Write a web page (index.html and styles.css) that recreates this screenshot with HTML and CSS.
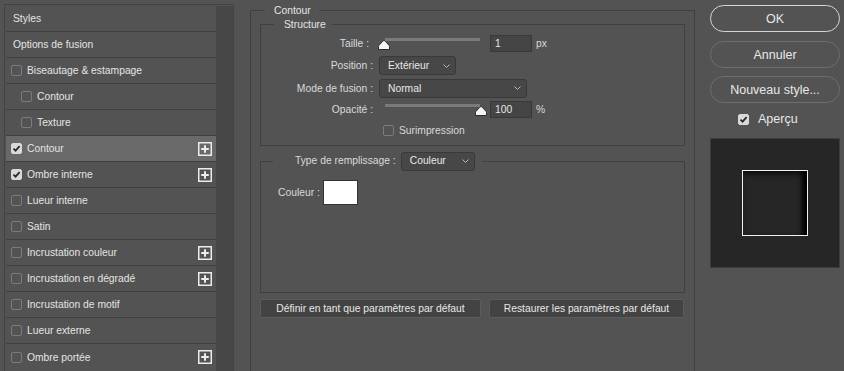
FILE: index.html
```html
<!DOCTYPE html>
<html lang="fr">
<head>
<meta charset="utf-8">
<title>Style de calque</title>
<link rel="stylesheet" href="styles.css">
</head>
<body>
<div class="dialog">
  <aside class="styles-panel">
    <ul class="style-list">
      <li class="row head">Styles</li>
      <li class="row head">Options de fusion</li>
      <li class="row"><span class="cb"></span>Biseautage &amp; estampage</li>
      <li class="row sub"><span class="cb"></span>Contour</li>
      <li class="row sub"><span class="cb"></span>Texture</li>
      <li class="row selected"><span class="cb checked"><svg viewBox="0 0 11 11"><path d="M2.5 5.6 L4.6 7.7 L8.6 3.2"/></svg></span>Contour<span class="plus"><svg viewBox="0 0 14 14"><rect x="0.75" y="0.75" width="12.5" height="12.5"/><path d="M7 3.2 V10.8 M3.2 7 H10.8"/></svg></span></li>
      <li class="row"><span class="cb checked"><svg viewBox="0 0 11 11"><path d="M2.5 5.6 L4.6 7.7 L8.6 3.2"/></svg></span>Ombre interne<span class="plus"><svg viewBox="0 0 14 14"><rect x="0.75" y="0.75" width="12.5" height="12.5"/><path d="M7 3.2 V10.8 M3.2 7 H10.8"/></svg></span></li>
      <li class="row"><span class="cb"></span>Lueur interne</li>
      <li class="row"><span class="cb"></span>Satin</li>
      <li class="row"><span class="cb"></span>Incrustation couleur<span class="plus"><svg viewBox="0 0 14 14"><rect x="0.75" y="0.75" width="12.5" height="12.5"/><path d="M7 3.2 V10.8 M3.2 7 H10.8"/></svg></span></li>
      <li class="row"><span class="cb"></span>Incrustation en dégradé<span class="plus"><svg viewBox="0 0 14 14"><rect x="0.75" y="0.75" width="12.5" height="12.5"/><path d="M7 3.2 V10.8 M3.2 7 H10.8"/></svg></span></li>
      <li class="row"><span class="cb"></span>Incrustation de motif</li>
      <li class="row"><span class="cb"></span>Lueur externe</li>
      <li class="row"><span class="cb"></span>Ombre portée<span class="plus"><svg viewBox="0 0 14 14"><rect x="0.75" y="0.75" width="12.5" height="12.5"/><path d="M7 3.2 V10.8 M3.2 7 H10.8"/></svg></span></li>
    </ul>
    <div class="scroll-strip"></div>
  </aside>

  <main class="settings">
    <fieldset class="group outer">
      <legend class="legend outer-legend">Contour</legend>

      <fieldset class="group structure">
        <legend class="legend structure-legend">Structure</legend>
        <div class="form">
          <label class="lbl lbl-taille">Taille :</label>
          <div class="ctrl">
            <div class="slider">
              <div class="track"></div>
              <div class="rail"><span class="thumb" style="left:0%"><svg viewBox="0 0 12 10"><path d="M6 0.6 Q6.8 0.6 7.6 1.6 L11.2 5.6 Q11.5 6 11.5 6.6 V9.5 H0.5 V6.6 Q0.5 6 0.8 5.6 L4.4 1.6 Q5.2 0.6 6 0.6 Z"/></svg></span></div>
            </div>
            <span class="num">1</span><span class="unit">px</span>
          </div>

          <label class="lbl">Position :</label>
          <div class="ctrl">
            <div class="select sel-position"><span>Extérieur</span><svg class="chev" viewBox="0 0 7 4"><path d="M0.5 0.5 L3.5 3.5 L6.5 0.5"/></svg></div>
          </div>

          <label class="lbl lbl-mode">Mode de fusion :</label>
          <div class="ctrl ctrl-mode">
            <div class="select sel-mode"><span>Normal</span><svg class="chev" viewBox="0 0 7 4"><path d="M0.5 0.5 L3.5 3.5 L6.5 0.5"/></svg></div>
          </div>

          <label class="lbl">Opacité :</label>
          <div class="ctrl">
            <div class="slider">
              <div class="track"></div>
              <div class="rail"><span class="thumb" style="left:100%"><svg viewBox="0 0 12 10"><path d="M6 0.6 Q6.8 0.6 7.6 1.6 L11.2 5.6 Q11.5 6 11.5 6.6 V9.5 H0.5 V6.6 Q0.5 6 0.8 5.6 L4.4 1.6 Q5.2 0.6 6 0.6 Z"/></svg></span></div>
            </div>
            <span class="num">100</span><span class="unit">%</span>
          </div>

          <span class="lbl"></span>
          <div class="ctrl ctrl-check">
            <span class="cb"></span><span>Surimpression</span>
          </div>
        </div>
      </fieldset>

      <fieldset class="group fill">
        <legend class="legend fill-legend">
          <span>Type de remplissage :</span>
          <span class="select sel-fill"><span>Couleur</span><svg class="chev" viewBox="0 0 7 4"><path d="M0.5 0.5 L3.5 3.5 L6.5 0.5"/></svg></span>
        </legend>
        <div class="color-row">
          <span>Couleur :</span><span class="swatch"></span>
        </div>
      </fieldset>

      <div class="defaults">
        <button class="btn-small">Définir en tant que paramètres par défaut</button>
        <button class="btn-small">Restaurer les paramètres par défaut</button>
      </div>
    </fieldset>
  </main>

  <aside class="actions">
    <button class="pill default">OK</button>
    <button class="pill">Annuler</button>
    <button class="pill">Nouveau style...</button>
    <div class="preview-toggle">
      <span class="cb checked big"><svg viewBox="0 0 11 11"><path d="M2.5 5.6 L4.6 7.7 L8.6 3.2"/></svg></span>
      <span>Aperçu</span>
    </div>
    <div class="preview">
      <div class="preview-square"></div>
    </div>
  </aside>
</div>
</body>
</html>
```

FILE: styles.css
```css
* { box-sizing: border-box; }

html, body {
  margin: 0;
  height: 100%;
}

body {
  background: #535353;
  color: #e4e4e4;
  font-family: "Liberation Sans", Arial, sans-serif;
  font-size: 10.3px;
  overflow: hidden;
}

.dialog {
  display: flex;
  align-items: flex-start;
  padding: 4px 0 0 4px;
}

/* ---------- left list ---------- */
.styles-panel {
  width: 230px;
  height: 367px;
  display: flex;
  border: 1px solid #434343;
  border-bottom: none;
  padding: 1px 0 0 1px;
}

.style-list {
  list-style: none;
  margin: 0;
  padding: 0;
  width: 210px;
}

.row {
  height: 26px;
  display: flex;
  align-items: center;
  padding-left: 5px;
  border-bottom: 1px solid #3f3f3f;
  white-space: nowrap;
}

.row:last-child { border-bottom: none; }

.row.head { padding-left: 7px; }
.row.sub { padding-left: 15px; }
.row.selected { background: #696969; }

.row .cb { margin-right: 5px; }

.scroll-strip {
  width: 17px;
  background: #474747;
}

.cb {
  width: 11px;
  height: 11px;
  flex: none;
  border: 1px solid #7c7c7c;
  border-radius: 2px;
  display: inline-flex;
}

.cb.checked {
  background: #d9d9d9;
  border-color: #d9d9d9;
}

.cb svg {
  width: 11px;
  height: 11px;
  margin: -1px;
  fill: none;
  stroke: #2b2b2b;
  stroke-width: 1.8;
}

.plus {
  margin-left: auto;
  margin-right: 4px;
  width: 14px;
  height: 14px;
}

.plus svg {
  display: block;
  width: 14px;
  height: 14px;
  fill: none;
  stroke: #ececec;
}

.plus rect { stroke-width: 1.5; }
.plus path { stroke-width: 2; }

/* ---------- center ---------- */
.settings {
  margin-left: 16px;
  width: 445px;
}

.group {
  margin: 0;
  border: 1px solid #404040;
  min-width: 0;
}

.outer {
  height: 367px;
  padding: 1px 9px 0 9px;
  border-bottom: none;
}

.legend {
  color: #e4e4e4;
  line-height: 13px;
  height: 13px;
}

.outer-legend {
  margin-left: 5px;
  padding: 0 8px 0 9px;
}

.structure {
  height: 128px;
  padding: 0;
}

.structure-legend {
  margin-left: 13px;
  padding: 0 6px 0 10px;
}

.form {
  display: grid;
  grid-template-columns: 112px 1fr;
  column-gap: 6px;
  grid-auto-rows: 19px;
  row-gap: 3px;
  padding-top: 3px;
}

.lbl {
  text-align: right;
  align-self: center;
  color: #dadada;
  white-space: nowrap;
}

.lbl-taille { padding-right: 4px; }

.lbl-mode, .ctrl-mode { margin-top: 1px; }

.ctrl {
  display: flex;
  align-items: center;
}

.ctrl-check {
  margin-top: -3px;
  padding-left: 4px;
  gap: 5px;
  color: #dadada;
}

.slider {
  position: relative;
  width: 104px;
  height: 19px;
  margin-right: 7px;
  align-self: flex-start;
}

.track {
  margin: 4px 0 0 6px;
  width: 95px;
  height: 3px;
  background: #7a7a7a;
}

.rail {
  position: absolute;
  left: -1px;
  top: 6px;
  width: 97px;
  height: 10px;
}

.thumb {
  position: absolute;
  top: 0;
  width: 12px;
  height: 10px;
}

.thumb svg {
  display: block;
  width: 12px;
  height: 10px;
  fill: #f4f4f4;
  stroke: #2a2a2a;
  stroke-width: 1;
}

.num {
  width: 42px;
  height: 17px;
  background: #454545;
  border: 1px solid #393939;
  padding-left: 4px;
  line-height: 15px;
  color: #e8e8e8;
}

.unit {
  margin-left: 4px;
  color: #dadada;
}

.select {
  height: 19px;
  display: flex;
  align-items: center;
  justify-content: space-between;
  background: #474747;
  border: 1px solid #393939;
  border-radius: 3px;
  padding: 0 5px 0 8px;
  color: #e8e8e8;
}

.sel-position { width: 77px; }
.sel-mode { width: 148px; padding-left: 8px; }
.sel-fill { width: 74px; padding-left: 8px; }

.chev {
  width: 7px;
  height: 4px;
  fill: none;
  stroke: #b8b8b8;
  stroke-width: 1;
}

.fill {
  margin-top: 6px;
  height: 141px;
  padding: 0 0 0 17px;
}

.fill-legend {
  height: 18px;
  line-height: 18px;
  display: flex;
  align-items: center;
  gap: 5px;
  margin-left: -5px;
  padding: 0 7px 0 22px;
  color: #dadada;
}

.color-row {
  display: flex;
  align-items: center;
  gap: 3px;
  margin-top: 10px;
  color: #dadada;
}

.swatch {
  width: 35px;
  height: 25px;
  background: #ffffff;
  border: 1px solid #333333;
}

.defaults {
  display: grid;
  grid-template-columns: 221px 195px;
  column-gap: 8px;
  margin-top: 6px;
}

.btn-small {
  height: 19px;
  padding: 0;
  background: #434343;
  border: 1px solid #5c5c5c;
  border-radius: 2px;
  color: #e8e8e8;
  font-family: inherit;
  font-size: 10.3px;
}

/* ---------- right column ---------- */
.actions {
  margin-left: 15px;
  width: 130px;
  display: flex;
  flex-direction: column;
}

.pill {
  height: 27px;
  margin-bottom: 9px;
  background: transparent;
  border: 1px solid #6e6e6e;
  border-radius: 14px;
  color: #e8e8e8;
  font-family: inherit;
  font-size: 12.5px;
  padding: 0;
}

.pill.default {
  margin-top: 1px;
  border-color: #d6d6d6;
}

.pill + .pill + .pill { margin-top: -1px; margin-bottom: 0; }

.preview-toggle {
  display: flex;
  align-items: center;
  gap: 9px;
  height: 20px;
  margin-top: 6px;
  padding-left: 28px;
  font-size: 12.5px;
  color: #e8e8e8;
}

.preview {
  margin-top: 9px;
  height: 130px;
  background: #262626;
  border: 1px solid #3c3c3c;
  display: flex;
  align-items: center;
  justify-content: center;
}

.preview-square {
  width: 66px;
  height: 66px;
  border: 1px solid #f2f2f2;
  background: #262626;
  box-shadow: inset -7px 0 5px -2px #000, inset 0 6px 6px -3px rgba(0, 0, 0, 0.7);
}
```
